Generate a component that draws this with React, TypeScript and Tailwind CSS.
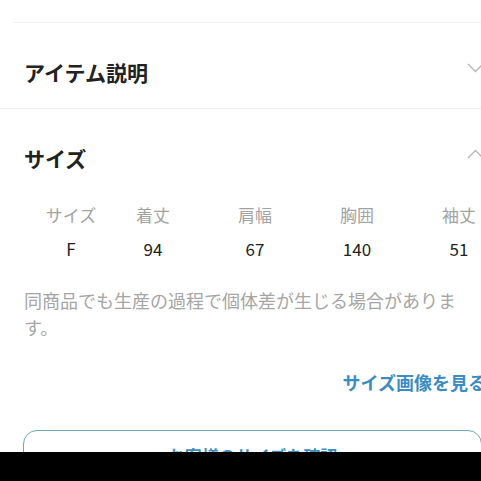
import * as React from "react";

const sizeCols = ["サイズ", "着丈", "肩幅", "胸囲", "袖丈"];
const sizeVals = ["F", "94", "67", "140", "51"];

const Chevron = ({ up }: { up?: boolean }) => (
  <svg width="17" height="10" viewBox="0 0 17 10" fill="none" className="shrink-0">
    <path
      d={up ? "M1 9L8.5 1.5L16 9" : "M1 1L8.5 8.5L16 1"}
      stroke="#b5b5b5"
      strokeWidth="1.3"
    />
  </svg>
);

export default function App() {
  return (
    <div
      className="relative h-[481px] w-[481px] overflow-hidden bg-white"
      style={{ fontFamily: '"Noto Sans CJK JP", "Noto Sans", sans-serif' }}
    >
      <div className="w-[490px]">
        <div className="h-[22px]" />
        <div className="ml-[13px] h-px bg-[#f1f1f1]" />

        {/* アイテム説明 */}
        <div className="flex h-[85px] items-start justify-between pl-6 pr-[6px] pt-[35px]">
          <h2 className="text-[21px] font-bold leading-[28px] text-[#222]">アイテム説明</h2>
          <div className="mt-[5px]">
            <Chevron />
          </div>
        </div>
        <div className="h-px bg-[#f1f1f1]" />

        {/* サイズ */}
        <div className="flex items-start justify-between pl-6 pr-[6px] pt-[35px]">
          <h2 className="text-[21px] font-bold leading-[28px] text-[#222]">サイズ</h2>
          <div className="mt-[5px]">
            <Chevron up />
          </div>
        </div>

        <div className="ml-10 mt-[31px] grid grid-cols-[62px_repeat(4,102px)] text-center">
          {sizeCols.map((c) => (
            <div key={c} className="text-[17px] leading-[24px] text-[#a3a3a3]">
              {c}
            </div>
          ))}
        </div>
        <div className="ml-10 mt-[10px] grid grid-cols-[62px_repeat(4,102px)] text-center">
          {sizeVals.map((v) => (
            <div key={v} className="text-[17px] leading-[24px] text-[#222]">
              {v}
            </div>
          ))}
        </div>

        <p className="mt-[26px] w-[460px] pl-6 text-[18px] leading-[27px] text-[#a5a5a5]">
          同商品でも生産の過程で個体差が生じる場合がありま す。
        </p>

        <div className="mt-[28px] flex justify-end pr-1">
          <a className="text-[18px] font-bold leading-[26px] text-[#3a8cc2]">サイズ画像を見る</a>
        </div>

        <div className="ml-[23px] mr-2 mt-[35px] flex h-[52px] items-center justify-center rounded-[14px] border border-[#6aa8b4]">
          <span className="text-[17px] font-bold text-[#3a8cc2]">お客様のサイズを確認</span>
        </div>
      </div>

      <div className="absolute bottom-0 left-0 h-[29px] w-full bg-black" />
    </div>
  );
}
